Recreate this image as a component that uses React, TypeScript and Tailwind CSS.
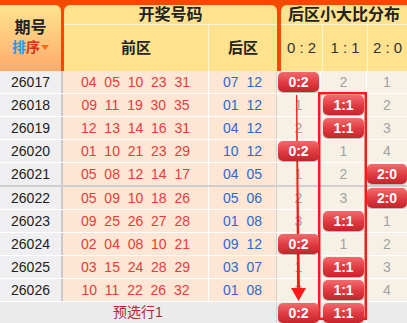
const rows = [
  { no: "26017", front: "04  05  10  23  31", back: "07  12", dist: ["B", "2", "1"] },
  { no: "26018", front: "09  11  19  30  35", back: "01  12", dist: ["1", "B", "2"] },
  { no: "26019", front: "12  13  14  16  31", back: "04  12", dist: ["2", "B", "3"] },
  { no: "26020", front: "01  10  21  23  29", back: "10  12", dist: ["B", "1", "4"] },
  { no: "26021", front: "05  08  12  14  17", back: "04  05", dist: ["1", "2", "B"] },
  { no: "26022", front: "05  09  10  18  26", back: "05  06", dist: ["2", "3", "B"] },
  { no: "26023", front: "09  25  26  27  28", back: "01  08", dist: ["3", "B", "1"] },
  { no: "26024", front: "02  04  08  10  21", back: "09  12", dist: ["B", "1", "2"] },
  { no: "26025", front: "03  15  24  28  29", back: "03  07", dist: ["1", "B", "3"] },
  { no: "26026", front: "10  11  22  26  32", back: "01  08", dist: ["2", "B", "4"] },
];

const labels = ["0:2", "1:1", "2:0"];

function Badge({ text, wide }: { text: string; wide?: boolean }) {
  return (
    <span
      className={`relative z-10 flex h-[20px] ${wide ? "w-full" : "w-[41px]"} items-center justify-center rounded-[5px] bg-linear-to-b from-[#f26a6d] via-[#e03d43] to-[#c4232a] text-[14px] font-bold leading-none text-white shadow-[0_1px_1px_rgba(0,0,0,0.25)]`}
    >
      {text}
    </span>
  );
}

function DistCell({ value, idx }: { value: string; idx: number }) {
  const widths = ["w-[44px] border-r border-r-white", "w-[46px] border-r border-r-white", "flex-1"];
  return (
    <div className={`flex ${widths[idx]} items-center justify-center`}>
      {value === "B" ? <Badge text={labels[idx]} wide={idx === 2} /> : value}
    </div>
  );
}

export default function App() {
  return (
    <div className="relative h-[323px] w-[407px] overflow-hidden bg-white font-['Liberation_Sans','Noto_Sans_CJK_SC',sans-serif] text-[14px]">
      {/* header */}
      <div className="flex h-[71px] bg-[#f24a00] pt-[5px] text-[#222]">
        <div className="flex w-[61px] flex-col items-center rounded-tr-[6px] bg-linear-to-b from-[#ffe48e] to-[#ffab6c] pt-[13px]">
          <span className="text-[16px] font-bold leading-[20px]">期号</span>
          <span className="flex items-center text-[14px] font-bold leading-[18px]">
            <span className="text-[#2e96ee]">排</span>
            <span className="text-[#d9301c]">序</span>
            <span className="ml-[1px] h-0 w-0 border-x-[4px] border-t-[5px] border-x-transparent border-t-[#ff6a10]" />
          </span>
        </div>
        <div className="ml-[3px] flex w-[213px] flex-col rounded-t-[6px] bg-[#ffe28d]">
          <div className="flex h-[20px] items-center justify-center border-b border-b-[#fff4d6] text-[16px] font-bold">
            开奖号码
          </div>
          <div className="flex flex-1 text-[15px] font-bold">
            <div className="flex w-[145px] items-center justify-center border-r border-r-[#fff4d6]">前区</div>
            <div className="flex flex-1 items-center justify-center">后区</div>
          </div>
        </div>
        <div className="ml-[4px] flex flex-1 flex-col rounded-tl-[6px] bg-[#ffe28d]">
          <div className="flex h-[20px] items-center justify-center border-b border-b-[#fff4d6] text-[16px] font-bold">
            后区小大比分布
          </div>
          <div className="flex flex-1 text-[15px] text-[#333]">
            <div className="flex w-[42px] items-center justify-center whitespace-pre border-r border-r-[#fff4d6]">0 : 2</div>
            <div className="flex w-[45px] items-center justify-center whitespace-pre border-r border-r-[#fff4d6]">1 : 1</div>
            <div className="flex flex-1 items-center justify-center whitespace-pre">2 : 0</div>
          </div>
        </div>
      </div>

      {/* data rows */}
      {rows.map((r, i) => (
        <div
          key={r.no}
          className={`flex ${i === 4 ? "h-[24px] border-b-2 border-b-[#cfcfcf]" : "h-[23px] border-b border-b-white"}`}
        >
          <div className="flex w-[63px] items-center justify-center border-r-2 border-r-[#c9c9c9] bg-[#efeff1] text-[#222]">
            {r.no}
          </div>
          <div className="flex w-[146px] items-center justify-center whitespace-pre border-r border-r-white bg-[#fde6d3] text-[#e63c3e]">
            {r.front}
          </div>
          <div className="flex w-[68px] items-center justify-center whitespace-pre border-r border-r-[#d2d2d2] bg-[#fde6d3] text-[#3366cc]">
            {r.back}
          </div>
          <div className="flex flex-1 bg-[#f6f0e5] text-[#a2a2a2]">
            {r.dist.map((d, k) => (
              <DistCell key={k} value={d} idx={k} />
            ))}
          </div>
        </div>
      ))}

      {/* footer */}
      <div className="flex h-[21px] bg-[#ebebeb]">
        <div className="flex w-[277px] items-center justify-center border-r border-r-[#d2d2d2] text-[#b02a2e]">
          预选行1
        </div>
        <div className="flex flex-1">
          <DistCell value="B" idx={0} />
          <DistCell value="B" idx={1} />
          <DistCell value="" idx={2} />
        </div>
      </div>

      {/* annotations, drawn under the badges */}
      <svg className="pointer-events-none absolute inset-0" width="407" height="323" viewBox="0 0 407 323">
        <rect x="319.25" y="93.25" width="46.5" height="225.5" fill="none" stroke="#ff1a1a" strokeWidth="2.5" />
        <polygon points="296,95 297.2,95 300,290 297,290" fill="#ff1a1a" />
        <polygon points="291,288 306,288 298.5,301" fill="#ff1a1a" />
      </svg>
    </div>
  );
}
